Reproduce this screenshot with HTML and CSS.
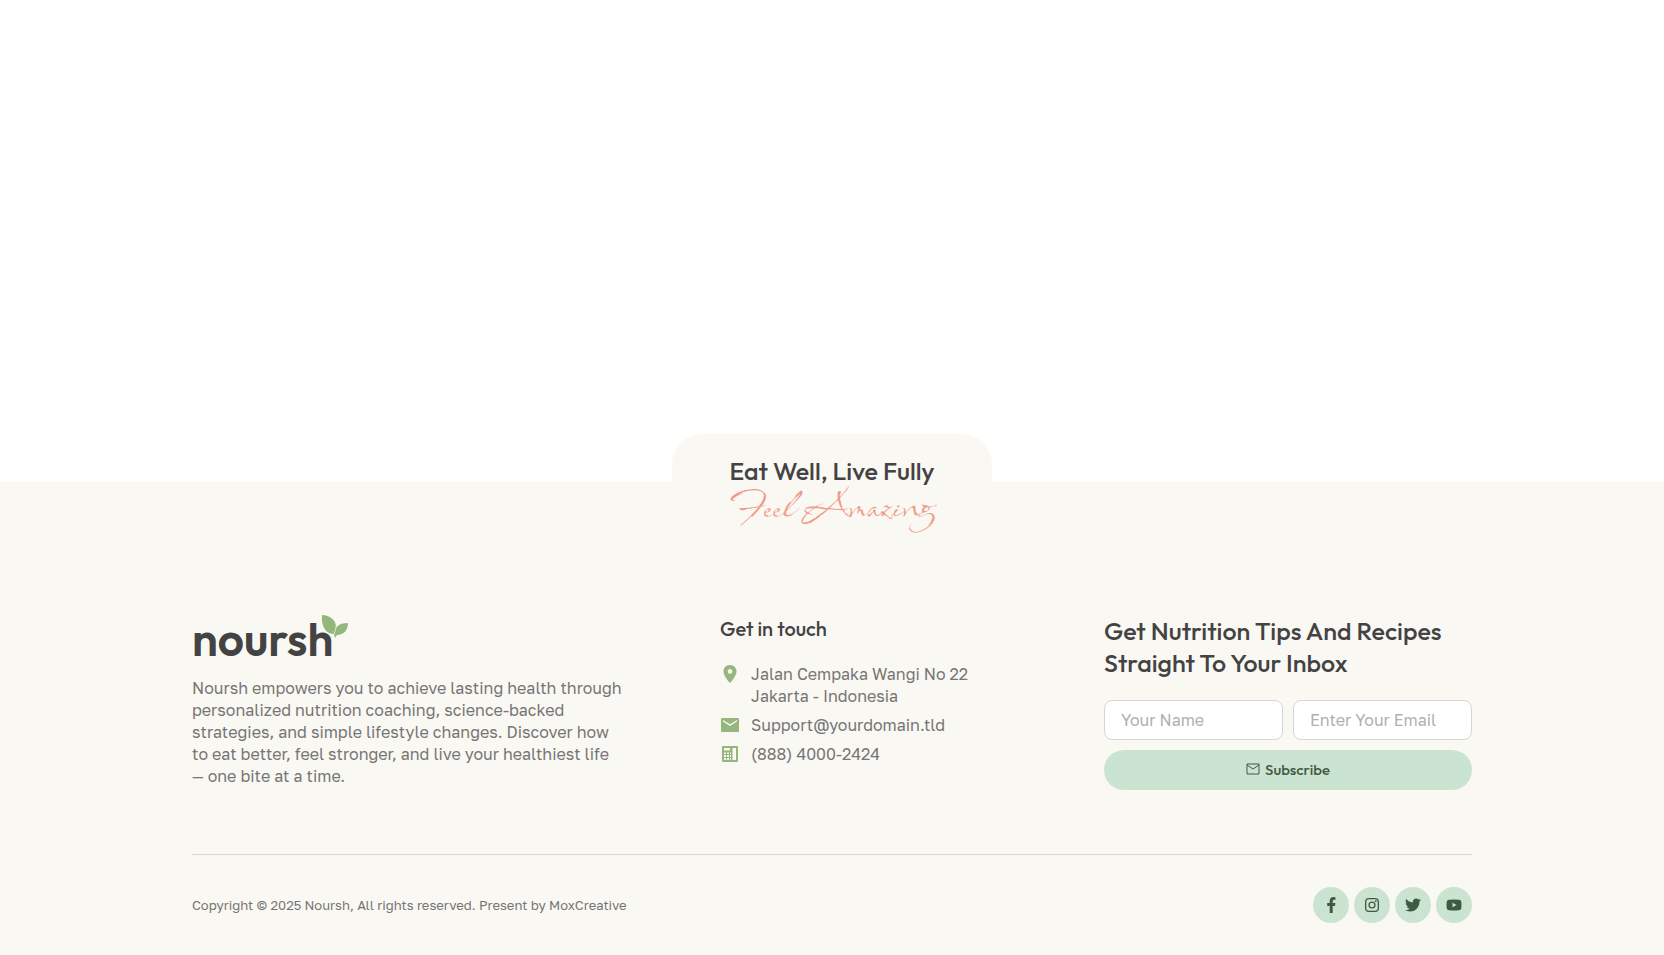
FILE: index.html
```html
<!DOCTYPE html>
<html lang="en">

<head>
  <meta charset="UTF-8" />
  <meta name="viewport" content="width=device-width, initial-scale=1.0" />
  <title>Noursh</title>
  <link rel="stylesheet" href="styles.css">
</head>

<body>
  <main class="content"></main>

  <footer class="footer">
    <div class="tagline">
      <h2 class="tagline-title">Eat Well, Live Fully</h2>
      <p class="tagline-script">Feel Amazing</p>
    </div>

    <div class="container">
      <div class="columns">
        <!-- about -->
        <section class="about">
          <a href="#" class="logo">noursh<svg class="logo-leaf" viewBox="0 0 28 24" aria-hidden="true">
              <path d="M1 0C8 0 14 4 15 11C15 14 14 17 13 19C5 19 0 12 1 0Z" />
              <path d="M27 8C27 15 23 20 16 20L14 23L13 19C14 11 19 8 27 8Z" />
              <path class="vein" d="M13 19C14 16 15 14 15 11" />
            </svg></a>
          <p class="about-text">Noursh empowers you to achieve lasting health through personalized nutrition coaching, science-backed strategies, and simple lifestyle changes. Discover how to eat better, feel stronger, and live your healthiest life — one bite at a time.</p>
        </section>

        <!-- contact -->
        <section class="contact">
          <h3 class="contact-title">Get in touch</h3>
          <ul class="contact-list">
            <li>
              <svg viewBox="0 0 20 20" aria-hidden="true">
                <path fill-rule="evenodd" d="M10 1C6.300 1 3.500 3.800 3.500 7.400C3.500 12 10 19 10 19S16.500 12 16.500 7.400C16.500 3.800 13.700 1 10 1ZM10 9.700A2.300 2.300 0 1 1 10 5.100A2.300 2.300 0 0 1 10 9.700Z" />
              </svg>
              <span>Jalan Cempaka Wangi No 22<br />Jakarta - Indonesia</span>
            </li>
            <li>
              <svg viewBox="0 0 20 20" aria-hidden="true">
                <path fill-rule="evenodd" d="M2.500 3H17.500A1.300 1.300 0 0 1 19 4.500V15.500A1.300 1.300 0 0 1 17.500 17H2.500A1.300 1.300 0 0 1 1 15.500V4.500A1.300 1.300 0 0 1 2.500 3ZM3 5V6.500L10 11L17 6.500V5L10 9.300Z" />
              </svg>
              <a href="#">Support@yourdomain.tld</a>
            </li>
            <li>
              <svg viewBox="0 0 20 20" aria-hidden="true">
                <path fill-rule="evenodd" d="M3 2H17Q18 2 18 3V17Q18 18 17 18H3Q2 18 2 17V3Q2 2 3 2ZM4 4V6.500H10V4ZM12.500 4V16H16V4ZM4 8.500V10H6V8.500ZM7 8.500V10H9V8.500ZM10 8.500V10H11V8.500ZM4 11V13H6V11ZM7 11V13H9V11ZM10 11V13H11V11ZM4 14V16H6V14ZM7 14V16H9V14ZM10 14V16H11V14Z" />
              </svg>
              <a href="#">(888) 4000-2424</a>
            </li>
          </ul>
        </section>

        <!-- newsletter -->
        <section class="newsletter">
          <h2 class="newsletter-title">Get Nutrition Tips And Recipes Straight To Your Inbox</h2>
          <form class="newsletter-form">
            <input type="text" name="name" placeholder="Your Name" aria-label="Your Name" />
            <input type="email" name="email" placeholder="Enter Your Email" aria-label="Enter Your Email" />
            <button type="submit">
              <svg viewBox="0 0 14 12" aria-hidden="true">
                <path d="M1 1H13V11H1ZM1 2L7 6L13 2" />
              </svg>
              Subscribe
            </button>
          </form>
        </section>
      </div>

      <div class="bottom">
        <p class="copyright">Copyright © 2025 Noursh, All rights reserved. Present by MoxCreative</p>
        <nav class="social">
          <a href="#" aria-label="Facebook">
            <svg viewBox="0 0 16 16"><path d="M12 8.900L12.400 6.100H9.700V4.300C9.700 3.500 10.100 2.700 11.300 2.700H12.500V.3S11.400 0 10.400 0C8.200 0 6.700 1.400 6.700 3.800V6.100H4.200V8.900H6.700V16H9.700V8.900Z" /></svg>
          </a>
          <a href="#" aria-label="Instagram">
            <svg viewBox="0 0 16 16"><path fill-rule="evenodd" d="M5 1H11A4 4 0 0 1 15 5V11A4 4 0 0 1 11 15H5A4 4 0 0 1 1 11V5A4 4 0 0 1 5 1ZM5 2.300A2.700 2.700 0 0 0 2.300 5V11A2.700 2.700 0 0 0 5 13.700H11A2.700 2.700 0 0 0 13.700 11V5A2.700 2.700 0 0 0 11 2.300ZM8 4.400A3.600 3.600 0 1 1 8 11.600A3.600 3.600 0 0 1 8 4.400ZM8 5.700A2.300 2.300 0 1 0 8 10.300A2.300 2.300 0 0 0 8 5.700Z" /><circle cx="11.800" cy="4.200" r=".9" /></svg>
          </a>
          <a href="#" aria-label="Twitter">
            <svg viewBox="0 0 512 512"><path d="M459.370 151.716c.325 4.548.325 9.097.325 13.645 0 138.720-105.583 298.558-298.558 298.558-59.452 0-114.680-17.219-161.137-47.106 8.447.974 16.568 1.299 25.340 1.299 49.055 0 94.213-16.568 130.274-44.832-46.132-.975-84.792-31.188-98.112-72.772 6.498.974 12.995 1.624 19.818 1.624 9.421 0 18.843-1.300 27.614-3.573-48.081-9.747-84.143-51.980-84.143-102.985v-1.299c13.969 7.797 30.214 12.670 47.431 13.319-28.264-18.843-46.781-51.005-46.781-87.391 0-19.492 5.197-37.360 14.294-52.954 51.655 63.675 129.300 105.258 216.365 109.807-1.624-7.797-2.599-15.918-2.599-24.040 0-57.828 46.782-104.934 104.934-104.934 30.213 0 57.502 12.670 76.670 33.137 23.715-4.548 46.456-13.320 66.599-25.340-7.798 24.366-24.366 44.833-46.132 57.827 21.117-2.273 41.584-8.122 60.426-16.243-14.292 20.791-32.161 39.308-52.628 54.253z" /></svg>
          </a>
          <a href="#" aria-label="YouTube">
            <svg viewBox="0 0 16 16"><path fill-rule="evenodd" d="M3 2.700Q8 2.300 13 2.700Q15 2.800 15.300 4.800Q15.700 8 15.300 11.200Q15 13.200 13 13.300Q8 13.700 3 13.300Q1 13.200 .7 11.200Q.3 8 .7 4.800Q1 2.800 3 2.700ZM6.500 5.700V10.300L10.500 8Z" /></svg>
          </a>
        </nav>
      </div>
    </div>
  </footer>
</body>

</html>
```
FILE: styles.css
```css
* {
  box-sizing: border-box;
}

body {
  margin: 0;
  min-height: 100vh;
  display: flex;
  flex-direction: column;
  background-color: #fff;
  color: #757575;
  font-family: "Golos Text", Inter, sans-serif;
  font-size: 16px;
  line-height: 22px;
}

h2,
h3,
p,
ul {
  margin: 0;
  padding: 0;
}

h2,
h3 {
  color: #434343;
  font-family: Outfit, Lato, sans-serif;
  font-weight: 500;
}

a {
  color: inherit;
  text-decoration: none;
}

.content {
  flex: 1;
}

.footer {
  background-color: #faf8f3;
}

/* tab that sticks out above the footer */
.tagline {
  width: 320px;
  margin: -48px auto 0;
  padding-top: 21px;
  border-radius: 30px 30px 0 0;
  background-color: #faf8f3;
  text-align: center;
}

.tagline-title {
  font-size: 25px;
  line-height: 32px;
}

.tagline-script {
  color: #f09c8a;
  font-family: Babylonica, WindSong, Lato, cursive;
  font-size: 45px;
  line-height: 40px;
}

.container {
  max-width: 1328px;
  margin: 0 auto;
  padding: 88px 24px 32px;
}

.columns {
  display: grid;
  grid-template-columns: 33fr 24fr 23fr;
  padding-bottom: 64px;
  border-bottom: 1px solid #d9d9d5;
}

.logo {
  position: relative;
  display: inline-block;
  height: 48px;
  color: #434343;
  font-family: Outfit, Lato, sans-serif;
  font-size: 46px;
  font-weight: 600;
  line-height: 48px;
}

.logo-leaf {
  position: absolute;
  top: 0;
  right: -16px;
  width: 28px;
  height: 24px;
  fill: #95b77d;
}

.logo-leaf .vein {
  fill: none;
  stroke: #d9e4cd;
  stroke-width: 1;
}

.about-text {
  max-width: 432px;
  margin-top: 14px;
}

.contact-title {
  margin-top: 2px;
  font-size: 20px;
  line-height: 24px;
}

.contact-list {
  display: flex;
  flex-direction: column;
  gap: 7px;
  margin-top: 22px;
  list-style: none;
}

.contact-list li {
  display: flex;
  gap: 11px;
}

.contact-list svg {
  width: 20px;
  height: 22px;
  fill: #95b77d;
}

.newsletter-title {
  font-size: 25px;
  line-height: 32px;
}

.newsletter-form {
  display: grid;
  grid-template-columns: 1fr 1fr;
  gap: 10px;
  margin-top: 21px;
}

.newsletter-form input {
  min-width: 0;
  height: 40px;
  padding: 0 16px;
  border: 1px solid #d5d5d5;
  border-radius: 8px;
  background-color: #fff;
  color: #757575;
  font: inherit;
}

.newsletter-form input::placeholder {
  color: #b0b0b0;
}

.newsletter-form button {
  grid-column: 1 / -1;
  display: flex;
  align-items: center;
  justify-content: center;
  gap: 5px;
  height: 40px;
  padding: 0 0 2px;
  border: 0;
  border-radius: 20px;
  background-color: #cbe4d1;
  color: #3f5a42;
  font-family: Outfit, Lato, sans-serif;
  font-size: 15px;
  font-weight: 500;
  cursor: pointer;
}

.newsletter-form button svg {
  width: 14px;
  height: 12px;
  fill: none;
  stroke: currentColor;
}

.bottom {
  display: flex;
  align-items: center;
  justify-content: space-between;
  padding-top: 32px;
}

.copyright {
  font-size: 13px;
}

.social {
  display: flex;
  gap: 5px;
}

.social a {
  display: flex;
  align-items: center;
  justify-content: center;
  width: 36px;
  height: 36px;
  border-radius: 50%;
  background-color: #cbe4d1;
}

.social svg {
  width: 16px;
  height: 16px;
  fill: #3f5a42;
}
```
